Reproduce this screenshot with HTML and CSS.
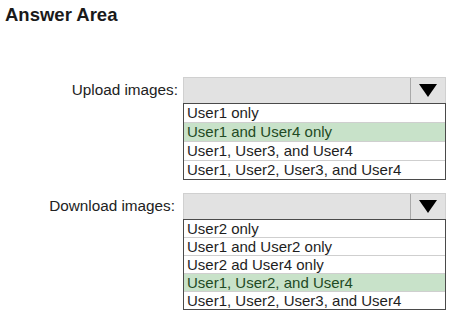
FILE: index.html
```html
<!DOCTYPE html>
<html lang="en">
<head>
    <meta charset="UTF-8">
    <title>Answer Area</title>
    <link rel="stylesheet" href="styles.css">
</head>
<body>
    <div class="page">
        <h1 class="title">Answer Area</h1>

        <div class="field">
            <span class="label">Upload images:</span>
            <div class="select">
                <div class="select-box">
                    <span class="value"></span>
                    <span class="arrow"></span>
                </div>
                <ul class="options options-tall">
                    <li>User1 only</li>
                    <li class="selected">User1 and User4 only</li>
                    <li>User1, User3, and User4</li>
                    <li>User1, User2, User3, and User4</li>
                </ul>
            </div>
        </div>

        <div class="field">
            <span class="label label-download">Download images:</span>
            <div class="select">
                <div class="select-box">
                    <span class="value"></span>
                    <span class="arrow"></span>
                </div>
                <ul class="options">
                    <li>User2 only</li>
                    <li>User1 and User2 only</li>
                    <li>User2 ad User4 only</li>
                    <li class="selected">User1, User2, and User4</li>
                    <li>User1, User2, User3, and User4</li>
                </ul>
            </div>
        </div>
    </div>
</body>
</html>
```

FILE: styles.css
```css
body {
    margin: 0;
    padding: 0;
    font-family: "Liberation Sans", Arial, sans-serif;
    background-color: #ffffff;
    color: #1e1e1e;
}

.page {
    width: 470px;
    height: 316px;
    overflow: hidden;
}

.title {
    margin: 0;
    padding: 4px 0 0 5px;
    font-size: 18.5px;
    line-height: 21px;
    font-weight: bold;
    color: #1a1a1a;
}

.field {
    display: grid;
    grid-template-columns: 178px 263px;
    column-gap: 5px;
    align-items: start;
    margin-top: 52px;
}

.field + .field {
    margin-top: 13px;
}

.label {
    font-size: 15.3px;
    line-height: 26px;
    text-align: right;
    color: #222;
}

.label-download {
    padding-right: 3px;
}

.select-box {
    display: flex;
    height: 26px;
    box-sizing: border-box;
    background-color: #e2e2e2;
    border: 1px solid #d0d0d0;
    border-bottom: none;
}

.value {
    flex: 1;
}

.arrow {
    width: 34px;
    display: flex;
    align-items: center;
    justify-content: center;
    border-left: 1px solid #a9a9a9;
}

.arrow::after {
    content: "";
    border-left: 9px solid transparent;
    border-right: 9px solid transparent;
    border-top: 13px solid #000;
}

.options {
    list-style: none;
    margin: 0;
    padding: 0;
    border: 1px solid #4a4a4a;
    background-color: #fff;
}

.options li {
    height: 17px;
    line-height: 17px;
    padding-left: 3px;
    font-size: 15px;
    white-space: nowrap;
    border-top: 1px solid #cfcfcf;
}

.options li:first-child {
    border-top: none;
}

.options-tall li {
    height: 18px;
    line-height: 18px;
}

.options .selected {
    background-color: #c8e2c9;
    color: #1f4a24;
}
```
